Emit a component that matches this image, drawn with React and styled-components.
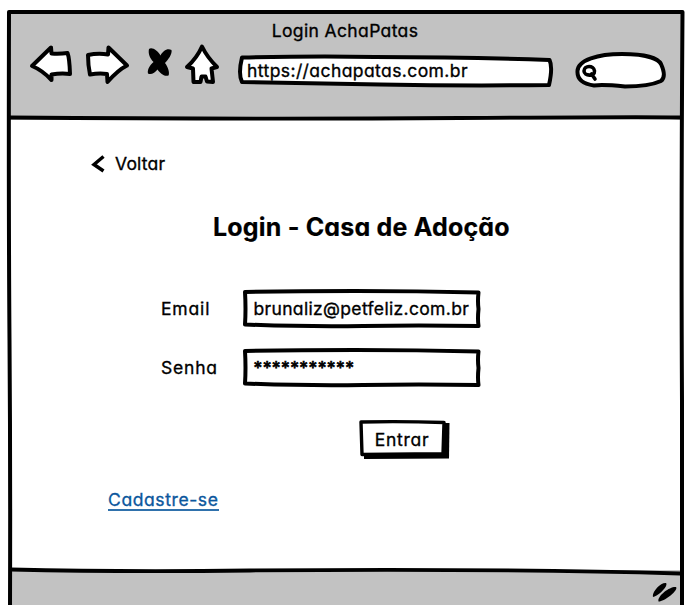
import React from "react";
import styled, { createGlobalStyle } from "styled-components";

const GlobalStyle = createGlobalStyle`
  * { box-sizing: border-box; }
  body { margin: 0; background: #fff; overflow: hidden; }
  a { color: inherit; }
`;

const Page = styled.main`
  height: 605px;
  padding: 10px 5px 0 7px;
  overflow: hidden;
  background: #fff;
  color: #000;
  font: 400 17.5px/24px Inter, "Liberation Sans", sans-serif;
  font-feature-settings: "cv11", "calt" 0;
`;

const BrowserWindow = styled.div`
  position: relative;
  display: flex;
  flex-direction: column;
  height: 595px;
`;

const Outline = styled.svg`
  position: absolute;
  inset: 0;
  width: 100%;
  height: 100%;
  overflow: visible;
  pointer-events: none;
`;

const Stroke = styled.path`
  fill: ${(p) => p.$fill || "none"};
  stroke: #000;
  stroke-width: ${(p) => p.$width || 4};
  stroke-linecap: round;
  stroke-linejoin: round;
`;

const Label = styled.span`
  position: relative;
  white-space: pre;
  letter-spacing: ${(p) => p.$spacing || 0}px;
  -webkit-text-stroke: ${(p) => p.$weight || 0.35}px currentColor;
`;

const Toolbar = styled.header`
  height: 108px;
  margin: 2px 3px 0 2px;
  background: #c2c2c2;
`;

const WindowTitle = styled.div`
  height: 30px;
  padding-top: 7px;
  text-align: center;
`;

const NavRow = styled.nav`
  display: flex;
  gap: 8px;
  padding-left: 19px;
`;

const NavIcon = styled.svg`
  flex: none;
  width: ${(p) => p.$width}px;
  height: 44px;
`;

const AddressBar = styled.div`
  position: relative;
  width: 316px;
  height: 32px;
  margin: 13px 0 0 8px;
  padding: 4px 0 0 9px;
`;

const SearchBox = styled(NavIcon)`
  margin-left: 12px;
  height: 48px;
`;

const Content = styled.section`
  flex: none;
  height: 450px;
  padding: 32px 0 0 83px;
`;

const BackLink = styled.div`
  display: flex;
  align-items: center;
  gap: 9px;
  height: 24px;
`;

const Heading = styled.h1`
  height: 36px;
  margin: 33px 0 0 123px;
  font-size: 25px;
  line-height: 36px;
  font-weight: 700;
`;

const Form = styled.div`
  display: grid;
  grid-template-columns: 82px 238px;
  grid-auto-rows: 39px;
  row-gap: 20px;
  margin: 44px 0 0 71px;
`;

const FieldName = styled.label`
  padding-top: 8px;
`;

const Field = styled.div`
  position: relative;
  padding: 8px 0 0 10.5px;
`;

const SubmitButton = styled.button`
  position: relative;
  display: block;
  width: 90px;
  height: 40px;
  margin: 33px 0 0 269px;
  padding: 1px 4px 1px 0;
  border: 0;
  background: none;
  color: inherit;
  font: inherit;
  font-feature-settings: inherit;
`;

const SignUpLink = styled.a`
  display: block;
  width: 111px;
  height: 24px;
  margin: 27px 0 0 18px;
  padding-top: 1px;
  border-bottom: 2px solid #2f71ac;
  color: #0b579d;
  line-height: 23px;
  text-decoration: none;
`;

const StatusBar = styled.footer`
  display: flex;
  justify-content: flex-end;
  flex: 1;
  margin: 0 3px 0 2px;
  padding: 11px 4px 0 0;
  background: #c2c2c2;
`;

function TextField({ children, spacing, weight }) {
  return (
    <Field>
      <Outline viewBox="0 0 238 39">
        <Stroke $fill="#fff" d="M2 3 Q50 2 112 2 T235.500 3.5 Q234.500 12 235.500 20 Q234.500 30 235.500 37 Q174 36 120 37 T2 35.5 Q3 20 2 3Z" />
      </Outline>
      <Label $spacing={spacing} $weight={weight}>{children}</Label>
    </Field>
  );
}

export default function App() {
  return (
    <Page>
      <GlobalStyle />
      <BrowserWindow>
        <Toolbar>
          <WindowTitle><Label $spacing={0.37}>Login AchaPatas</Label></WindowTitle>
          <NavRow>
            <NavIcon $width={46} viewBox="28 42 46 44">
              <Stroke $fill="#fff" d="M32 66 L51 47.5 L51.5 53.5 Q60 54 67.5 53 Q69.5 58 70 74 Q61 73 51.5 74.5 L51.5 80 Q42 70 32 66Z" />
            </NavIcon>
            <NavIcon $width={50} viewBox="82 42 50 44">
              <Stroke $fill="#fff" d="M88 55 Q98 53 108 54.5 L108.5 47.5 L127 65.5 Q118 70 107.5 82 L107 74 Q99 73 90 74.5 Q88 65 88 55Z" />
            </NavIcon>
            <NavIcon $width={36} viewBox="140 42 36 44">
              <path d="M149 49 C152 46.500 158 51 160.5 55.5 C163 51 167 48 171.500 50 C172.500 54 168 60 165 63 C168 67 170 73 168.500 75.500 C164 77 160 73 157.500 69.500 C155 73 151 75 148 73.5 C147 70 150 65 153.500 62 C149.500 58 148 53 149 49Z" />
            </NavIcon>
            <NavIcon $width={38} viewBox="184 42 38 44">
              <Stroke $fill="#fff" d="M202 46.5 Q207 57 217 67 L211.5 68.5 L213 82 L207 81.5 L205.5 76.5 L201.5 76.5 L200.5 82 L193.5 82 L193 68.5 L187 67 Q197 58 202 46.5Z" />
            </NavIcon>
            <AddressBar>
              <Outline viewBox="238 55 316 32">
                <Stroke $fill="#fff" d="M242 57.5 Q315 56 375 57 Q470 57 549.5 60 Q553 67 549 85 Q465 86 380 84.5 Q300 83 242 82 Q238 74 242 57.5Z" />
              </Outline>
              <Label $spacing={0.42}>https://achapatas.com.br</Label>
            </AddressBar>
            <SearchBox $width={94} viewBox="574 42 94 48">
              <Stroke $fill="#fff" d="M577.5 71 C578 60 598 54 622 54 C650 54 659 60 661 64 C665 73 665 78 661 81 C650 86 638 86.5 625 86.5 C610 85 601 84.5 594 85.5 C583 84 577 79 577.5 71Z" />
              <Stroke $width={3.6} d="M594.5 71 C595 77 584 76 584 71 C584 65 594 65 594.5 71 M591.5 74 L595 79" />
            </SearchBox>
          </NavRow>
        </Toolbar>
        <Content>
          <BackLink>
            <svg width="16" height="20" viewBox="90 154 16 20">
              <path d="M103.500 156.500 L94 164.500 L103.5 171" fill="none" stroke="#000" strokeWidth="3.5" />
            </svg>
            <Label $spacing={0.2}>Voltar</Label>
          </BackLink>
          <Heading><Label $spacing={0.19} $weight={0.2}>Login - Casa de Adoção</Label></Heading>
          <Form>
            <FieldName><Label $spacing={0.85}>Email</Label></FieldName>
            <TextField spacing={0.34}>brunaliz@petfeliz.com.br</TextField>
            <FieldName><Label $spacing={0.8}>Senha</Label></FieldName>
            <TextField spacing={0.4} weight={0.7}>***********</TextField>
          </Form>
          <SubmitButton type="button">
            <Outline viewBox="359 421 90 40">
              <path d="M364 424 H449.5 L449 459.5 L364 460Z" />
              <Stroke $fill="#fff" $width={3.4} d="M361 423 Q400 422 444 423.5 L443 455 Q400 454.5 362 455.5Z" />
            </Outline>
            <Label $spacing={0.7}>Entrar</Label>
          </SubmitButton>
          <SignUpLink href="#"><Label $spacing={0.6}>Cadastre-se</Label></SignUpLink>
        </Content>
        <StatusBar>
          <svg width="26" height="24" viewBox="650 581 26 24">
            <path d="M652 597 C650.500 592 660 582 665 583 C668 586 656 597 652 597Z M657.5 601.500 C656 596 669 586 675 587 C678 590 663 602 657.5 601.500Z" />
          </svg>
        </StatusBar>
        <Outline viewBox="7 10 677 595">
          <Stroke d="M9 12 H682.5 Q681 220 682 400 L682 608 M9 12 Q8.5 210 9.5 340 T10 608" />
          <Stroke $width={3.8} d="M10 117.5 Q260 119.5 460 118 T681 117.5 M11 569.5 Q120 572 250 570.5 Q500 568.5 680 573.5" />
        </Outline>
      </BrowserWindow>
    </Page>
  );
}
